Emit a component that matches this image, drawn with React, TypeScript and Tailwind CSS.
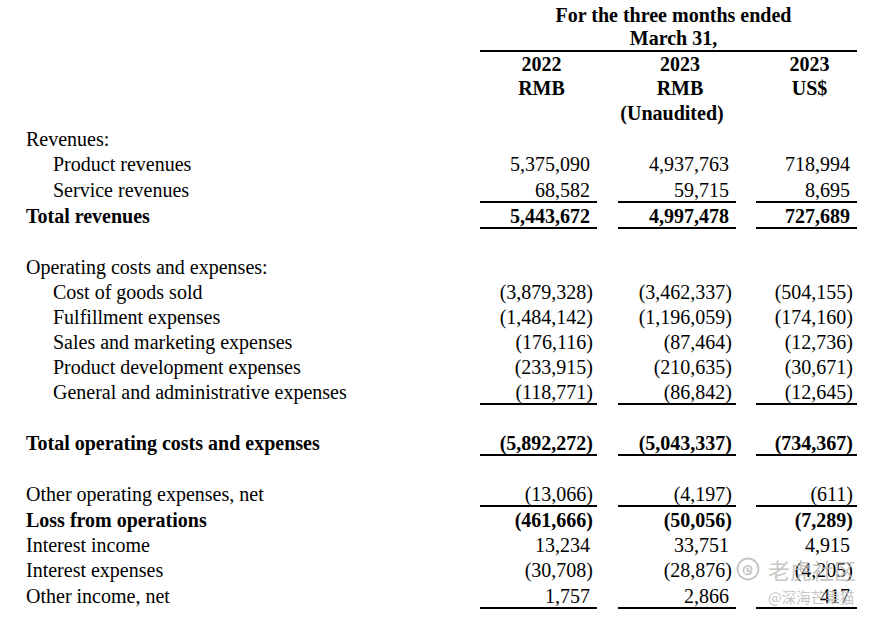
import React from "react";

type Row = {
  label: string;
  indent?: boolean;
  bold?: boolean;
  vals?: [string, string, string];
  line?: boolean;
  tall?: boolean;
};

const rows: Row[] = [
  { label: "Revenues:" },
  { label: "Product revenues", indent: true, vals: ["5,375,090", "4,937,763", "718,994"], tall: true },
  { label: "Service revenues", indent: true, vals: ["68,582", "59,715", "8,695"], line: true },
  { label: "Total revenues", bold: true, vals: ["5,443,672", "4,997,478", "727,689"], line: true },
  { label: "" },
  { label: "Operating costs and expenses:" },
  { label: "Cost of goods sold", indent: true, vals: ["(3,879,328)", "(3,462,337)", "(504,155)"] },
  { label: "Fulfillment expenses", indent: true, vals: ["(1,484,142)", "(1,196,059)", "(174,160)"] },
  { label: "Sales and marketing expenses", indent: true, vals: ["(176,116)", "(87,464)", "(12,736)"] },
  { label: "Product development expenses", indent: true, vals: ["(233,915)", "(210,635)", "(30,671)"] },
  { label: "General and administrative expenses", indent: true, vals: ["(118,771)", "(86,842)", "(12,645)"], line: true },
  { label: "" },
  { label: "Total operating costs and expenses", bold: true, vals: ["(5,892,272)", "(5,043,337)", "(734,367)"], line: true },
  { label: "" },
  { label: "Other operating expenses, net", vals: ["(13,066)", "(4,197)", "(611)"], line: true },
  { label: "Loss from operations", bold: true, vals: ["(461,666)", "(50,056)", "(7,289)"] },
  { label: "Interest income", vals: ["13,234", "33,751", "4,915"] },
  { label: "Interest expenses", vals: ["(30,708)", "(28,876)", "(4,205)"], tall: true },
  { label: "Other income, net", vals: ["1,757", "2,866", "417"], line: true },
];

const colCls = ["w-[117px]", "ml-[21px] w-[118px]", "ml-[20px] w-[101px]"];

function Cell({ v, idx, line }: { v: string; idx: number; line?: boolean }) {
  const neg = v.startsWith("(");
  return (
    <div
      className={
        colCls[idx] +
        " flex h-full items-center justify-end " +
        (neg ? "pr-[4px] " : "pr-[7px] ") +
        (line ? "border-b-2 border-black" : "")
      }
    >
      <span className={line ? "mt-[1px]" : ""}>{v}</span>
    </div>
  );
}

export default function App() {
  return (
    <div className="relative w-[873px] h-[619px] overflow-hidden bg-white text-black font-['Liberation_Serif',serif] text-[20px]">
      {/* Header */}
      <div className="flex pt-[4px]">
        <div className="w-[480px]" />
        <div className="w-[377px] border-b-2 border-black pl-[10px] text-center font-bold leading-[23px]">
          <div>For the three months ended</div>
          <div>March 31,</div>
        </div>
      </div>
      <div className="flex h-[24px] items-center font-bold leading-[24px]">
        <div className="w-[480px]" />
        <div className={colCls[0] + " pl-[6px] text-center"}>2022</div>
        <div className={colCls[1] + " pl-[6px] text-center"}>2023</div>
        <div className={colCls[2] + " pl-[6px] text-center"}>2023</div>
      </div>
      <div className="flex h-[25px] items-center font-bold leading-[25px]">
        <div className="w-[480px]" />
        <div className={colCls[0] + " pl-[6px] text-center"}>RMB</div>
        <div className={colCls[1] + " pl-[6px] text-center"}>RMB</div>
        <div className={colCls[2] + " pl-[6px] text-center"}>US$</div>
      </div>
      <div className="flex h-[25px] items-center font-bold leading-[25px]">
        <div className="w-[480px]" />
        <div className={colCls[0]} />
        <div className={colCls[1] + " pr-[10px] text-center"}>(Unaudited)</div>
        <div className={colCls[2]} />
      </div>

      {/* Body */}
      <div className="flex flex-col">
        {rows.map((r, i) => (
          <div
            key={i}
            className={
              "flex items-stretch leading-[24px] " +
              (r.line || r.tall ? "h-[26px] " : "h-[25px] ") +
              (r.bold ? "font-bold" : "")
            }
          >
            <div
              className={
                "flex w-[480px] items-center " + (r.indent ? "pl-[53px]" : "pl-[26px]")
              }
            >
              {r.label}
            </div>
            {r.vals &&
              r.vals.map((v, j) => <Cell key={j} v={v} idx={j} line={r.line} />)}
          </div>
        ))}
      </div>

      {/* Watermark */}
      <div className="pointer-events-none absolute left-[736px] top-[557px] flex items-center gap-[8px] opacity-85">
        <svg width="24" height="24" viewBox="0 0 24 24" fill="none">
          <circle cx="12" cy="12" r="10.5" stroke="#bdbdbd" strokeWidth="1.8" fill="rgba(255,255,255,0.5)" />
          <path
            d="M8 15.5c-1.5-2.5 0-6 3.2-6.6 2.6-.5 4.6 1.3 4.3 3.4-.3 1.8-2.2 2.6-3.6 1.8-1.1-.6-1-2.1.1-2.4"
            stroke="#bdbdbd"
            strokeWidth="1.8"
            strokeLinecap="round"
          />
          <path d="M9.5 17c2 .6 4.5.1 6-1.6" stroke="#bdbdbd" strokeWidth="1.8" strokeLinecap="round" />
        </svg>
        <span className="font-['Noto_Sans_CJK_SC',sans-serif] text-[22px] leading-[24px] text-[#bdbdbd]">
          老虎社区
        </span>
      </div>
      <div className="pointer-events-none absolute left-[768px] top-[588px] font-['Noto_Sans_CJK_SC',sans-serif] text-[14.5px] leading-[18px] text-[#c0c0c0] opacity-90">
        @深海芒果猫
      </div>
    </div>
  );
}
